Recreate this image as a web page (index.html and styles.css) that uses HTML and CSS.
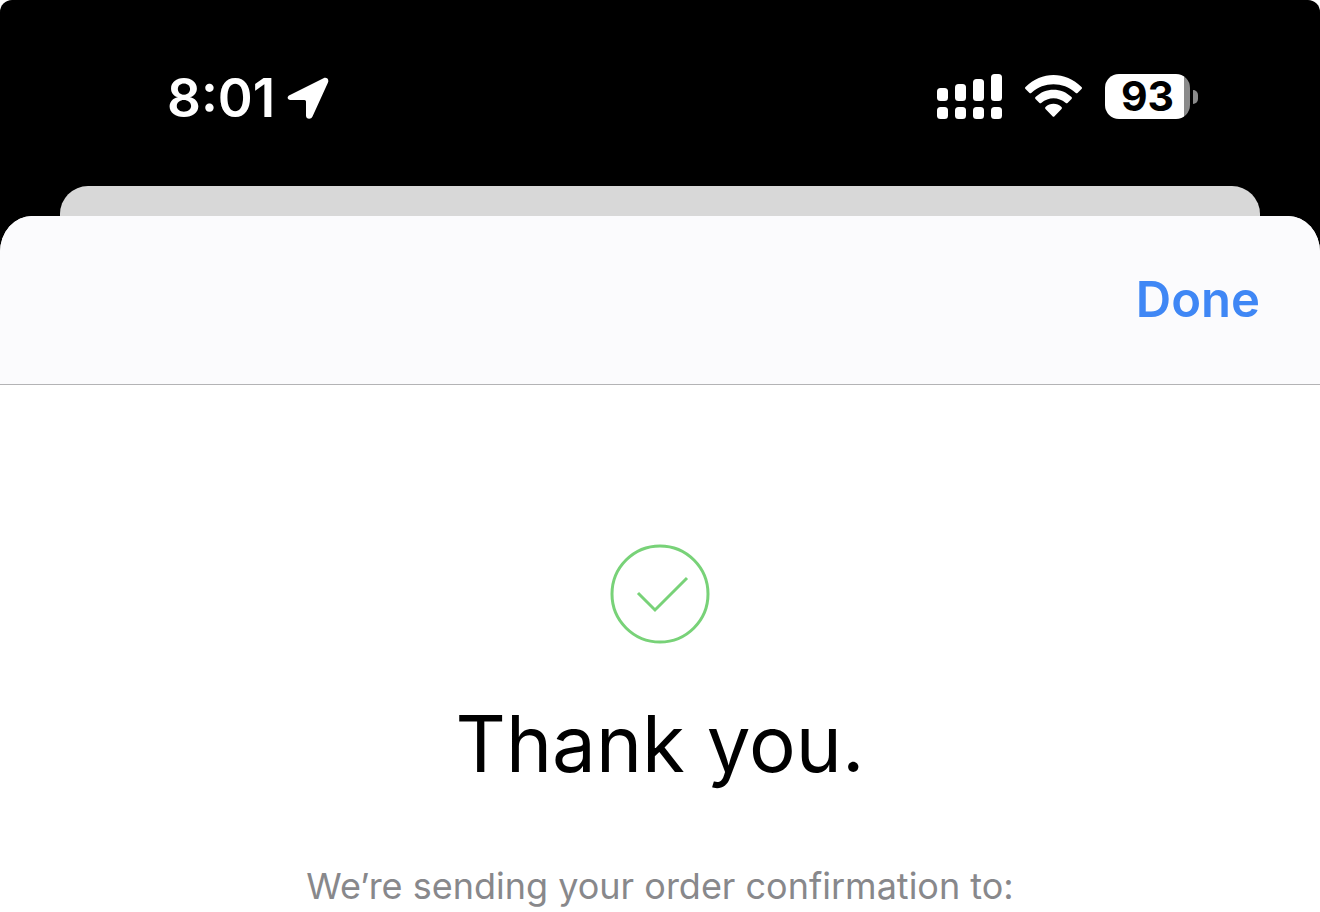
FILE: index.html
```html
<!DOCTYPE html>
<html lang="en">

<head>
    <meta charset="UTF-8">
    <meta name="viewport" content="width=device-width, initial-scale=1.0">
    <title>Order confirmation</title>
    <link rel="stylesheet" href="styles.css">
</head>

<body>
    <div class="screen">
        <header class="status_bar">
            <div class="status_left">
                <span class="time">8:01</span>
                <svg class="location" width="42" height="42" viewBox="0 0 42 42" aria-hidden="true">
                    <path d="M3 18 L36.500 1.200 C39.500 -.2 42.300 2.200 41 5.500 L25.500 39.500 C24 42.800 19 42.300 19 38.500 V24.500 Q19 23 17.500 23 H3.500 C0 23 -.4 19.500 3 18 Z" fill="#fff"/>
                </svg>
            </div>
            <div class="status_right">
                <svg width="66" height="46" viewBox="0 0 66 46" fill="#fff" aria-hidden="true">
                    <rect x="0" y="14" width="11" height="13" rx="3.500"/>
                    <rect x="18" y="10" width="11" height="17" rx="3.500"/>
                    <rect x="36" y="5" width="11" height="22" rx="3.500"/>
                    <rect x="54" y="0" width="11" height="27" rx="3.500"/>
                    <rect x="0" y="33" width="11" height="12" rx="3.500"/>
                    <rect x="18" y="33" width="11" height="12" rx="3.500"/>
                    <rect x="36" y="33" width="11" height="12" rx="3.500"/>
                    <rect x="54" y="33" width="11" height="12" rx="3.500"/>
                </svg>
                <svg width="58" height="46" viewBox="0 0 58 46" fill="#fff" aria-hidden="true">
                    <path d="M.5 13 C16.500 -3 40.500 -3 56.500 13 Q57.500 14 56.500 15 L52.500 19 Q51.500 19.800 50.500 18.800 C38 7.500 19 7.500 6.500 18.800 Q5.500 19.800 4.500 19 L.5 15 Q-.5 14 .5 13 Z"/>
                    <path d="M10.500 23 C20.500 13.200 36.500 13.200 46.500 23 Q47.500 24 46.500 25 L42.500 29 Q41.500 29.800 40.500 28.800 C33.500 22.600 23.500 22.600 16.500 28.800 Q15.500 29.800 14.500 29 L10.500 25 Q9.500 24 10.500 23 Z"/>
                    <path d="M20.500 33 C25 28.700 32 28.700 36.500 33 Q37.500 34 36.500 35 L29.500 42.200 Q28.500 43.200 27.500 42.200 L20.500 35 Q19.500 34 20.500 33 Z"/>
                </svg>
                <div class="battery">
                    <span class="level">93</span>
                    <span class="cap"></span>
                </div>
            </div>
        </header>

        <div class="back_sheet"></div>

        <main class="sheet">
            <nav class="sheet_bar">
                <button class="done" type="button">Done</button>
            </nav>
            <section class="message">
                <svg class="check" width="100" height="100" viewBox="0 0 100 100" fill="none" stroke="#78d278" stroke-width="3" aria-hidden="true">
                    <circle cx="50" cy="50" r="48"/>
                    <path d="M28 49 L45 66 L77 34"/>
                </svg>
                <h1>Thank you.</h1>
                <p>We’re sending your order confirmation to:</p>
            </section>
        </main>
    </div>
</body>

</html>
```

FILE: styles.css
```css
body {
    margin: 0;
    background-color: white;
    font-family: Inter, "Liberation Sans", sans-serif;
}

.screen {
    background-color: black;
    border-radius: 12px 12px 0 0;
}

.status_bar {
    display: flex;
    justify-content: space-between;
    align-items: flex-start;
    box-sizing: border-box;
    height: 186px;
    padding: 74px 122px 0 167px;
    color: white;
}

.status_left {
    display: flex;
    align-items: center;
    gap: 12px;
    height: 48px;
}

.time {
    font-size: 53px;
    font-weight: 600;
    line-height: 48px;
}

.status_right {
    display: flex;
    align-items: flex-start;
    gap: 22px;
}

.battery {
    display: flex;
    align-items: center;
    gap: 3px;
}

.level {
    width: 85px;
    height: 45px;
    border-radius: 14px;
    background: linear-gradient(to right, white 79px, #8a8a8a 79px);
    color: black;
    font-size: 41px;
    font-weight: 700;
    line-height: 45px;
    text-align: center;
}

.cap {
    width: 5px;
    height: 14px;
    border-radius: 0 7px 7px 0;
    background-color: #8a8a8a;
}

.back_sheet {
    height: 30px;
    margin: 0 60px;
    border-radius: 28px 28px 0 0;
    background-color: #d8d8d8;
}

.sheet {
    background-color: white;
    border-radius: 32px 32px 0 0 / 36px 36px 0 0;
    overflow: hidden;
}

.sheet_bar {
    display: flex;
    justify-content: flex-end;
    align-items: center;
    height: 168px;
    padding: 0 60px;
    border-bottom: 1px solid #b3b3b5;
    background-color: #fbfbfd;
}

.done {
    padding: 0;
    border: none;
    background: none;
    color: #3f87f5;
    font-family: inherit;
    font-size: 49px;
    font-weight: 600;
    line-height: 60px;
    cursor: pointer;
}

.message {
    display: flex;
    flex-direction: column;
    align-items: center;
    padding-top: 159px;
    text-align: center;
}

h1 {
    margin: 52px 0 0;
    font-size: 78px;
    font-weight: 400;
    line-height: 96px;
}

p {
    margin: 72px 0 0;
    color: #88888b;
    font-size: 36px;
    line-height: 44px;
}
```
